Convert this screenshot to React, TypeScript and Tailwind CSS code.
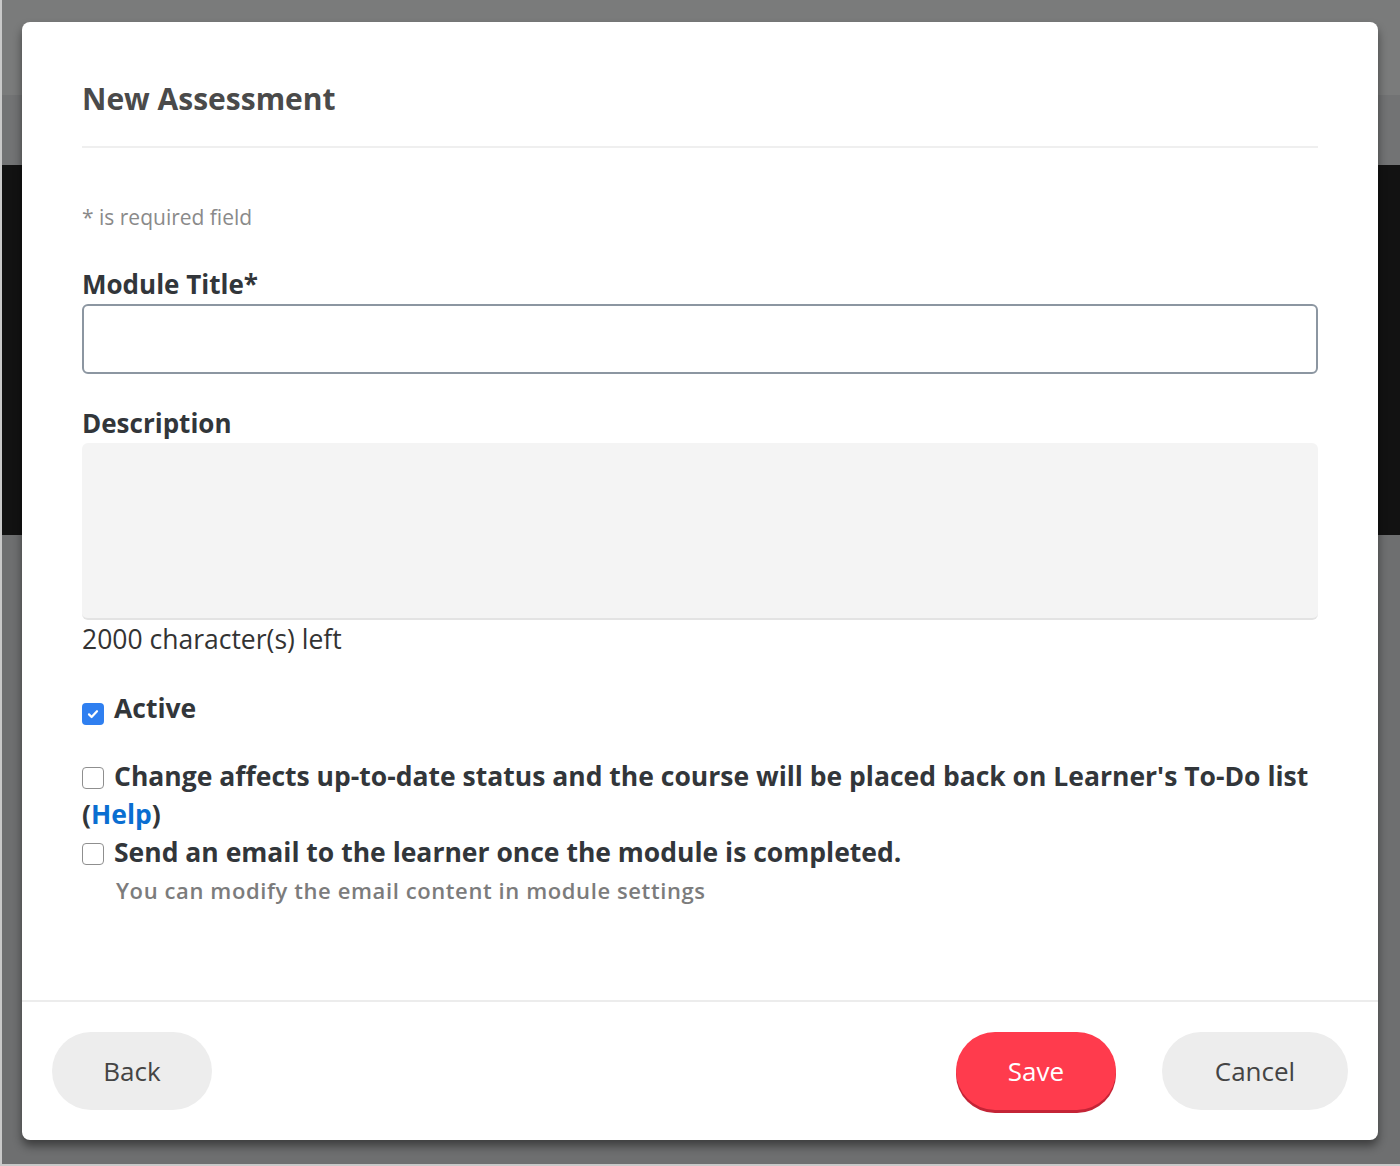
import React from "react";

const font = { fontFamily: '"Open Sans", "Noto Sans", Arial, sans-serif' };

const Box: React.FC<{ checked?: boolean }> = ({ checked }) =>
  checked ? (
    <span className="inline-flex w-[22px] h-[22px] rounded-[4px] bg-[#2f7ff0] items-center justify-center align-[-3px] mr-[10px]">
      <svg width="14" height="14" viewBox="0 0 14 14">
        <path d="M3 7.4l2.6 2.6L11 4.2" fill="none" stroke="#fff" strokeWidth="2.2" strokeLinecap="round" strokeLinejoin="round" />
      </svg>
    </span>
  ) : (
    <span className="inline-block w-[22px] h-[22px] rounded-[4px] border-[1.5px] border-[#8f8f8f] bg-white align-[-3px] mr-[10px]" />
  );

const App: React.FC = () => {
  return (
    <div className="relative w-[1400px] h-[1166px] overflow-hidden border-l-2 border-b-2 border-[#c9c9c9]" style={font}>
      {/* page behind the overlay */}
      <div className="flex flex-col h-full">
        <div className="h-[95px] bg-[#7a7b7b]" />
        <div className="h-[70px] bg-[#727374]" />
        <div className="h-[370px] bg-[#121212]" />
        <div className="flex-1 bg-[#6e6f70]" />
      </div>

      {/* modal */}
      <div className="absolute left-[20px] top-[22px] w-[1356px] h-[1118px] bg-white rounded-[8px] shadow-[0_6px_10px_rgba(0,0,0,0.45)] flex flex-col">
        <div className="px-[60px] pt-[59px]">
          <h1 className="text-[30px] leading-[36px] font-bold text-[#4a4a4a]">New Assessment</h1>
          <div className="mt-[29px] h-[2px] bg-[#efefef]" />

          <p className="mt-[55px] text-[21px] leading-[28px] text-[#8a8a8a]">* is required field</p>

          <label className="block mt-[37px] text-[26px] leading-[32px] font-bold text-[#32363a]">Module Title*</label>
          <div className="mt-[4px] h-[70px] rounded-[6px] border-2 border-[#8c96a1] bg-white" />

          <label className="block mt-[33px] text-[26px] leading-[32px] font-bold text-[#32363a]">Description</label>
          <div className="mt-[4px] h-[177px] rounded-[6px] bg-[#f4f4f4] border-b-2 border-[#e3e3e3]" />
          <p className="mt-[3px] text-[26.5px] leading-[32px] text-[#333]">2000 character(s) left</p>

          <p className="mt-[35px] text-[26.5px] leading-[36px] font-bold text-[#32363a]">
            <Box checked />
            Active
          </p>

          <p className="mt-[31px] text-[26.5px] leading-[38px] font-bold text-[#32363a]">
            <Box />
            Change affects up-to-date status and the course will be placed back on Learner's To-Do list{" "}
            <span className="whitespace-nowrap">(<span className="text-[#0a6ed1]">Help</span>)</span>
          </p>
          <p className="text-[26.5px] leading-[38px] font-bold text-[#32363a]">
            <Box />
            Send an email to the learner once the module is completed.
          </p>
          <p className="mt-[5px] pl-[34px] text-[22px] leading-[28px] font-semibold tracking-[0.6px] text-[#7c7c7c]">
            You can modify the email content in module settings
          </p>
        </div>

        <div className="mt-auto border-t-2 border-[#ececec] px-[30px] pt-[30px] pb-[30px] flex items-center">
          <button className="w-[160px] h-[78px] rounded-full bg-[#ededed] text-[26px] text-[#444]">Back</button>
          <div className="flex-1" />
          <button className="w-[160px] h-[78px] rounded-full bg-[#ff3b4d] text-[26px] text-white shadow-[0_3px_0_#c42436]">Save</button>
          <button className="ml-[46px] w-[186px] h-[78px] rounded-full bg-[#ededed] text-[26px] text-[#444]">Cancel</button>
        </div>
      </div>
    </div>
  );
};

export default App;
